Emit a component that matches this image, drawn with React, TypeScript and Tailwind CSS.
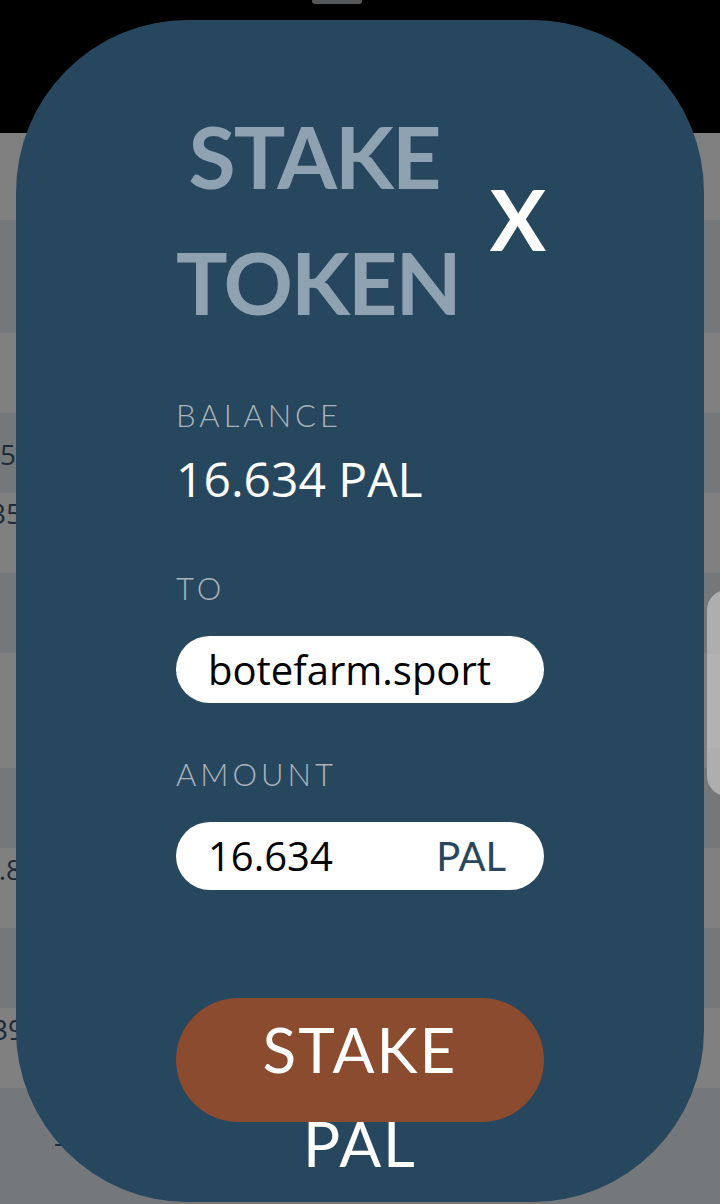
import React from "react";

type Row = { h: number; dark: boolean; text?: string; textTop?: number; textW?: number; dash?: boolean };

const rows: Row[] = [
  { h: 87, dark: false },
  { h: 113, dark: true },
  { h: 80, dark: false },
  { h: 80, dark: true, text: "0.25", textTop: 24, textW: 16 },
  { h: 80, dark: false, text: "0.35", textTop: 3, textW: 22 },
  { h: 80, dark: true },
  { h: 115, dark: false },
  { h: 80, dark: true },
  { h: 80, dark: false, text: "0.8", textTop: 4, textW: 22 },
  { h: 80, dark: true },
  { h: 80, dark: false, text: "0.39", textTop: 4, textW: 24 },
  { h: 116, dark: true, dash: true },
];

function Label({ children, className = "" }: { children: React.ReactNode; className?: string }) {
  return (
    <div
      className={`text-[31px] leading-[36px] font-light tracking-[4px] text-[#a9b3bc] ${className}`}
    >
      {children}
    </div>
  );
}

export default function App() {
  return (
    <div className="relative w-[720px] h-[1204px] overflow-hidden bg-[#75787b] font-['Lato',sans-serif]">
      {/* background page */}
      <div className="flex flex-col">
        <div className="h-[133px] bg-black pl-[312px]">
          <div className="w-[50px] h-[4px] rounded-b-[3px] bg-[#555759]" />
        </div>
        {rows.map((r, i) => (
          <div
            key={i}
            className={`flex items-start font-['Open_Sans',sans-serif] text-[28px] leading-[34px] text-[#1d2b3a] ${
              r.dark ? "bg-[#75787b]" : "bg-[#808080]"
            }`}
            style={{ height: r.h }}
          >
            {r.text && (
              <div className="flex justify-end whitespace-nowrap" style={{ marginTop: r.textTop, width: r.textW }}>
                <span>{r.text}</span>
              </div>
            )}
            {r.dash && <span className="ml-[54px] mt-[36px]">-</span>}
          </div>
        ))}
      </div>

      {/* right side card */}
      <div className="absolute left-[707px] top-[590px] w-[40px] h-[206px] rounded-l-[20px] bg-[#aeaeaf] flex flex-col">
        <div className="h-[64px]" />
        <div className="h-[94px] bg-[#b2b2b3]" />
      </div>

      {/* modal */}
      <div className="absolute left-[16px] top-[20px] w-[688px] h-[1182px] rounded-[172px] bg-[#27475e] px-[160px] pt-[73px]">
        <div className="flex items-center justify-between">
          <h1 className="w-[276px] text-center font-bold text-[86px] leading-[126px] tracking-[-2px] text-[#8fa2b2]">
            STAKE TOKEN
          </h1>
          <span className="mr-[-2px] text-[84px] leading-none font-bold text-white">X</span>
        </div>

        <Label className="mt-[52px]">BALANCE</Label>
        <div className="mt-[22px] font-['Open_Sans',sans-serif] text-[48px] leading-[48px] text-white">
          16.634 PAL
        </div>

        <Label className="mt-[67px]">TO</Label>
        <div className="mt-[30px] h-[67px] rounded-full bg-white flex items-center pl-[32px] font-['Open_Sans',sans-serif] text-[40px] text-black">
          botefarm.sport
        </div>

        <Label className="mt-[53px]">AMOUNT</Label>
        <div className="mt-[30px] h-[68px] rounded-full bg-white flex items-center justify-between pl-[32px] pr-[38px]">
          <span className="font-['Open_Sans',sans-serif] text-[40px] text-black">16.634</span>
          <span className="text-[40px] text-[#27475e]">PAL</span>
        </div>

        <div className="mt-[108px] h-[124px] rounded-full bg-[#8b4b2e] px-[80px] pt-[4px] text-center text-white text-[62px] leading-[94px] tracking-[2px]">
          STAKE PAL
        </div>
      </div>
    </div>
  );
}
